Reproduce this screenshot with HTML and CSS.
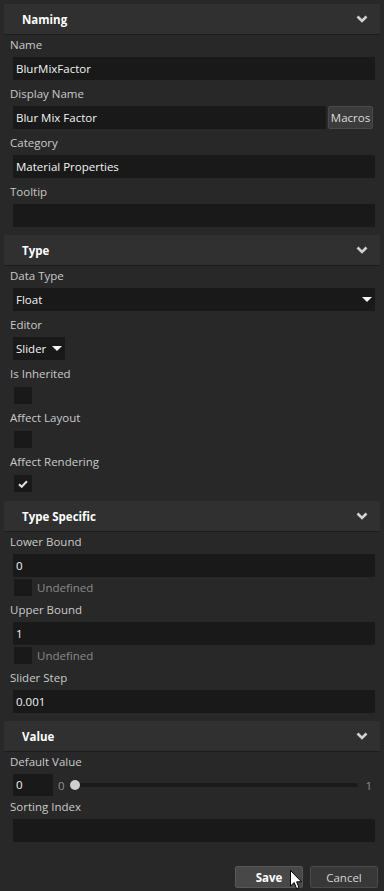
FILE: index.html
```html
<!DOCTYPE html>
<html lang="en">
<head>
    <meta charset="UTF-8">
    <meta name="viewport" content="width=device-width, initial-scale=1.0">
    <title>Property Editor</title>
    <link rel="stylesheet" href="styles.css">
</head>
<body>
    <section class="group">
        <div class="group-head">
            <span>Naming</span>
            <svg class="chevron" width="12" height="8" viewBox="0 0 12 8"><polyline points="1.5,1.5 6,6 10.5,1.5" /></svg>
        </div>
        <div class="group-body">
            <div class="field">
                <label>Name</label>
                <div class="input">BlurMixFactor</div>
            </div>
            <div class="field">
                <label>Display Name</label>
                <div class="input-row">
                    <div class="input grow">Blur Mix Factor</div>
                    <button class="macros">Macros</button>
                </div>
            </div>
            <div class="field">
                <label>Category</label>
                <div class="input">Material Properties</div>
            </div>
            <div class="field">
                <label>Tooltip</label>
                <div class="input"></div>
            </div>
        </div>
    </section>

    <section class="group">
        <div class="group-head">
            <span>Type</span>
            <svg class="chevron" width="12" height="8" viewBox="0 0 12 8"><polyline points="1.5,1.5 6,6 10.5,1.5" /></svg>
        </div>
        <div class="group-body type-body">
            <div class="field">
                <label>Data Type</label>
                <div class="select">Float<span class="arrow"></span></div>
            </div>
            <div class="field">
                <label>Editor</label>
                <div class="select short">Slider<span class="arrow"></span></div>
            </div>
            <div class="field flag">
                <label>Is Inherited</label>
                <div class="check"></div>
            </div>
            <div class="field flag">
                <label>Affect Layout</label>
                <div class="check"></div>
            </div>
            <div class="field flag">
                <label>Affect Rendering</label>
                <div class="check">
                    <svg width="10" height="8" viewBox="0 0 10 8"><polyline points="1,4.2 3.7,6.8 9,1.2" /></svg>
                </div>
            </div>
        </div>
    </section>

    <section class="group">
        <div class="group-head">
            <span>Type Specific</span>
            <svg class="chevron" width="12" height="8" viewBox="0 0 12 8"><polyline points="1.5,1.5 6,6 10.5,1.5" /></svg>
        </div>
        <div class="group-body">
            <div class="field">
                <label>Lower Bound</label>
                <div class="input">0</div>
                <div class="undefined"><div class="check"></div><span>Undefined</span></div>
            </div>
            <div class="field">
                <label>Upper Bound</label>
                <div class="input">1</div>
                <div class="undefined"><div class="check"></div><span>Undefined</span></div>
            </div>
            <div class="field">
                <label>Slider Step</label>
                <div class="input">0.001</div>
            </div>
        </div>
    </section>

    <section class="group">
        <div class="group-head">
            <span>Value</span>
            <svg class="chevron" width="12" height="8" viewBox="0 0 12 8"><polyline points="1.5,1.5 6,6 10.5,1.5" /></svg>
        </div>
        <div class="group-body">
            <div class="field">
                <label>Default Value</label>
                <div class="value-row">
                    <div class="input small">0</div>
                    <span class="bound">0</span>
                    <div class="slider">
                        <div class="track"></div>
                        <div class="thumb"></div>
                    </div>
                    <span class="bound">1</span>
                </div>
            </div>
            <div class="field sorting">
                <label>Sorting Index</label>
                <div class="input"></div>
            </div>
        </div>
    </section>

    <footer class="actions">
        <button class="btn save">Save</button>
        <button class="btn">Cancel</button>
        <svg class="cursor" width="13" height="20" viewBox="0 0 13 20">
            <path d="M0.5,0.5 L0.5,16 L4.2,12.6 L6.6,18.6 L9,17.6 L6.6,11.8 L11.5,11.8 Z" />
        </svg>
    </footer>
</body>
</html>
```

FILE: styles.css
```css
body {
    margin: 0;
    padding: 4px;
    background: #282828;
    color: #c9c9c9;
    font-family: 'Open Sans', 'Noto Sans', sans-serif;
    font-size: 11.5px;
    min-height: 100vh;
    box-sizing: border-box;
}

.group-head {
    height: 30px;
    background: #303030;
    border-bottom: 1px solid #1c1c1c;
    display: flex;
    align-items: center;
    justify-content: space-between;
    padding: 0 12px 0 18px;
    color: #fff;
    font-weight: 700;
}

.chevron polyline {
    fill: none;
    stroke: #d2d2d2;
    stroke-width: 2.6;
}

.group-body {
    padding: 2px 5px 8px 6px;
    display: flex;
    flex-direction: column;
    gap: 6px;
}

.type-body {
    padding-bottom: 9px;
}

.field {
    display: flex;
    flex-direction: column;
    gap: 4px;
}

.field.flag {
    gap: 5px;
}

.field label {
    line-height: 16px;
    color: #cacaca;
}

.input {
    margin-left: 3px;
    height: 23px;
    line-height: 23px;
    padding: 0 3px;
    background: #191919;
    color: #f4f4f4;
}

.input-row {
    display: flex;
    gap: 2px;
}

.input.grow {
    flex: 1;
}

.macros {
    width: 45px;
    height: 23px;
    padding: 0;
    border: 1px solid #4a4a4a;
    border-radius: 2px;
    background: #3b3b3b;
    color: #dcdcdc;
    font-family: inherit;
    font-size: 11.5px;
    margin-right: 2px;
}

.select {
    margin-left: 3px;
    height: 23px;
    padding: 0 3px;
    background: #191919;
    color: #f4f4f4;
    display: flex;
    align-items: center;
    justify-content: space-between;
    box-sizing: border-box;
}

.select.short {
    width: 52px;
}

.select .arrow {
    width: 0;
    height: 0;
    border-left: 5px solid transparent;
    border-right: 5px solid transparent;
    border-top: 5px solid #f4f4f4;
}

.check {
    width: 18px;
    height: 17px;
    margin-left: 4px;
    background: #191919;
    display: flex;
    align-items: center;
    justify-content: center;
}

.check polyline {
    fill: none;
    stroke: #e0e0e0;
    stroke-width: 2;
}

.undefined {
    display: flex;
    align-items: center;
    gap: 5px;
    height: 17px;
    margin-top: -2px;
    color: #8a8a8a;
}

.value-row {
    display: flex;
    align-items: center;
    gap: 5px;
    height: 22px;
}

.input.small {
    width: 34px;
    height: 22px;
    line-height: 22px;
}

.bound {
    color: #8f8f8f;
}

.slider {
    flex: 1;
    height: 10px;
    position: relative;
    display: flex;
    align-items: center;
    margin-right: 2px;
}

.track {
    flex: 1;
    height: 4px;
    margin-left: 5px;
    border-radius: 2px;
    background: #1a1a1a;
}

.thumb {
    position: absolute;
    left: 0;
    top: 0;
    width: 10px;
    height: 10px;
    border-radius: 50%;
    background: #cfcfcf;
}

.value-row .bound:last-child {
    margin-right: 3px;
}

.sorting {
    margin-top: -3px;
}

.actions {
    position: relative;
    display: flex;
    justify-content: flex-end;
    gap: 7px;
    padding: 16px 2px 0 0;
}

.btn {
    width: 68px;
    height: 22px;
    padding: 0;
    border: 1px solid #4a4a4a;
    border-radius: 2px;
    background: #383838;
    color: #d6d6d6;
    font-family: inherit;
    font-size: 11.5px;
}

.btn.save {
    background: #484848;
    border-color: #585858;
    color: #fff;
    font-weight: 700;
}

.cursor {
    position: absolute;
    left: 286px;
    top: 20px;
}

.cursor path {
    fill: #fff;
    stroke: #000;
    stroke-width: 1;
}
```
